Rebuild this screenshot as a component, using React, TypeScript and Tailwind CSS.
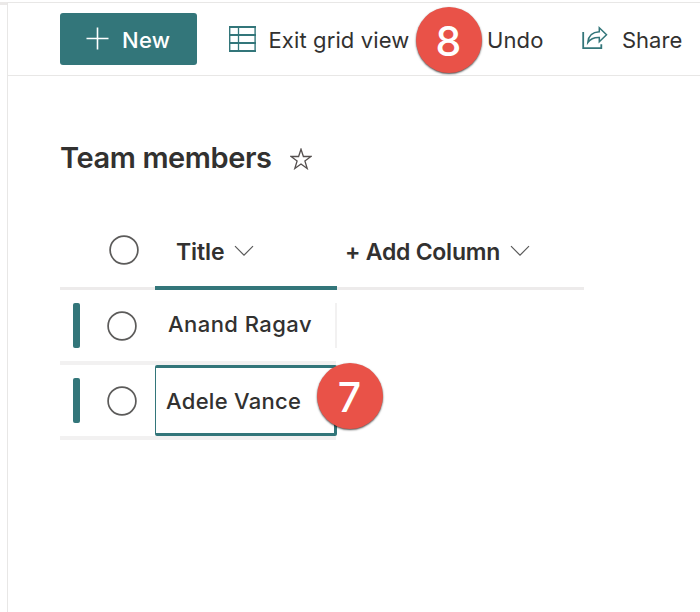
import React from "react";

type RowProps = { name: string; active?: boolean };

function Chevron() {
  return (
    <svg className="h-3 w-5 shrink-0" viewBox="0 0 20 12" fill="none" stroke="#5a5a5a" strokeWidth="1.2">
      <path d="M1 1.2 10 10.2 19 1.2" />
    </svg>
  );
}

function GridIcon() {
  return (
    <svg className="h-[26px] w-[27px] shrink-0" viewBox="0 0 27 26" fill="none" stroke="#33767a">
      <rect x="0.7" y="0.8" width="25.4" height="24.5" strokeWidth="1.4" />
      <path d="M9.5 1v24" strokeWidth="1.3" />
      <path d="M0 1h27M0 9h27M0 17h27M0 25h27" strokeWidth="2" />
    </svg>
  );
}

function ShareIcon() {
  return (
    <svg className="-mt-[2px] h-[24px] w-[26px] shrink-0" viewBox="0 0 26 24" fill="none" stroke="#33767a" strokeWidth="1.5">
      <path d="M1.2 6v16.200h18.100v-4" strokeWidth="1.8" />
      <path d="M17.300 1.800 24.500 8.800 17.300 15.800v-4.300c-5.200-.2-8.800 1.200-11.500 5 .5-6.200 4.600-10.300 11.500-10.700z" />
    </svg>
  );
}

function Badge({ value, place }: { value: string; place: string }) {
  return (
    <div className={`absolute flex size-[66px] items-center justify-center rounded-full bg-[#e95248] text-[41px] leading-none font-[550] text-white shadow-[0_1px_2px_rgba(0,0,0,0.7)] ${place}`}>
      <span className="-ml-px pt-[2px]">{value}</span>
    </div>
  );
}

function Circle() {
  return (
    <svg className="size-[30px] shrink-0" viewBox="0 0 30 30" fill="none" stroke="#5c5b5a" strokeWidth="1.7">
      <circle cx="15" cy="15" r="13.900" />
    </svg>
  );
}

function Row({ name, active = false }: RowProps) {
  return (
    <div className="flex h-[75px] w-[276px] border-b-[4px] border-[#f2f1f1]">
      <div className="flex w-[95px] shrink-0 items-center pb-[1px] pl-[13px]">
        <span className="h-[45px] w-[7px] rounded-[2px] bg-[#33767a]" />
        <span className="ml-[27px] flex pt-px">
          <Circle />
        </span>
      </div>
      {active ? (
        <div className="relative h-[71px] w-[182px] shrink-0 rounded-[2px] border-[3px] border-l border-[#33767a] pt-[17px] pl-[11px] text-[22px] leading-[32px] font-[550] whitespace-nowrap">
          <span className="-ml-px tracking-[0.3px]">{name}</span>
          <Badge value="7" place="-top-[5px] left-[161px]" />
        </div>
      ) : (
        <div className="flex w-[182px] shrink-0 items-center pb-px">
          <div className="flex h-[45px] w-full items-center border-r-2 border-[#f2f1f1] pb-[2px] pl-[13px] text-[22px] font-[550] tracking-[0.45px] whitespace-nowrap">
            {name}
          </div>
        </div>
      )}
    </div>
  );
}

export default function App() {
  return (
    <div className="flex h-[612px] w-[700px] overflow-hidden bg-white font-['Inter',sans-serif] text-[#323130]">
      <div className="mt-[2px] w-[7px] shrink-0 border-t-[3px] border-[#ebe9e8]" />
      <main className="mt-[2px] min-w-0 flex-1 border-t border-l border-[#e8e7e6]">
        <header className="relative flex h-[73px] items-center border-b border-[#e8e7e6] pl-[52px] text-[22px] whitespace-nowrap">
          <button className="flex h-[52px] w-[137px] items-center rounded-[3px] bg-[#33767a] pt-[2px] pl-[26px] font-[550] text-white">
            <svg className="-mt-[3px] size-[23px] shrink-0" viewBox="0 0 23 23" stroke="white" strokeWidth="1.6">
              <path d="M0.500 11.500h22M11.500 0.500v22" />
            </svg>
            <span className="ml-[13px] tracking-[0.3px]">New</span>
          </button>
          <div className="ml-[32px] flex w-[258px] items-center">
            <GridIcon />
            <span className="ml-[12.500px] pt-[2px] tracking-[0.12px]">Exit grid view</span>
          </div>
          <span className="w-[95px] pt-[2px] tracking-[0.1px]">Undo</span>
          <ShareIcon />
          <span className="ml-[14px] pt-[2px]">Share</span>
          <Badge value="8" place="top-[4px] left-[408px]" />
        </header>
        <section className="pt-[60px] pl-[52px]">
          <div className="flex h-[44px] items-center">
            <h1 className="w-[230px] text-[29px] font-semibold tracking-[-0.4px] whitespace-nowrap">Team members</h1>
            <svg className="mt-[2px] size-[22px]" viewBox="0 0 22 22" fill="none" stroke="#55504f" strokeWidth="1.3">
              <path d="M11 1.200 13.400 8.500H21L14.900 12.900 17.200 20.500 11 16 4.800 20.500 7.100 12.900 1 8.500H8.600Z" />
            </svg>
          </div>
          <div className="mt-[35px] flex h-[75px] w-[524px] text-[23px] font-semibold whitespace-nowrap">
            <div className="w-[95px] border-b-[3px] border-[#edebeb] pt-[20px] pl-[49px]">
              <Circle />
            </div>
            <div className="flex w-[182px] items-center border-b-[4px] border-[#33767a] pl-[21px]">
              <span className="w-[58px] pt-[3px] tracking-[-0.1px]">Title</span>
              <Chevron />
            </div>
            <div className="flex w-[247px] items-center border-b-[3px] border-[#edebeb] pl-[8px]">
              <span className="w-[165px] pt-[2px] tracking-[-0.25px]">+ Add Column</span>
              <Chevron />
            </div>
          </div>
          <Row name="Anand Ragav" />
          <Row name="Adele Vance" active />
        </section>
      </main>
    </div>
  );
}
